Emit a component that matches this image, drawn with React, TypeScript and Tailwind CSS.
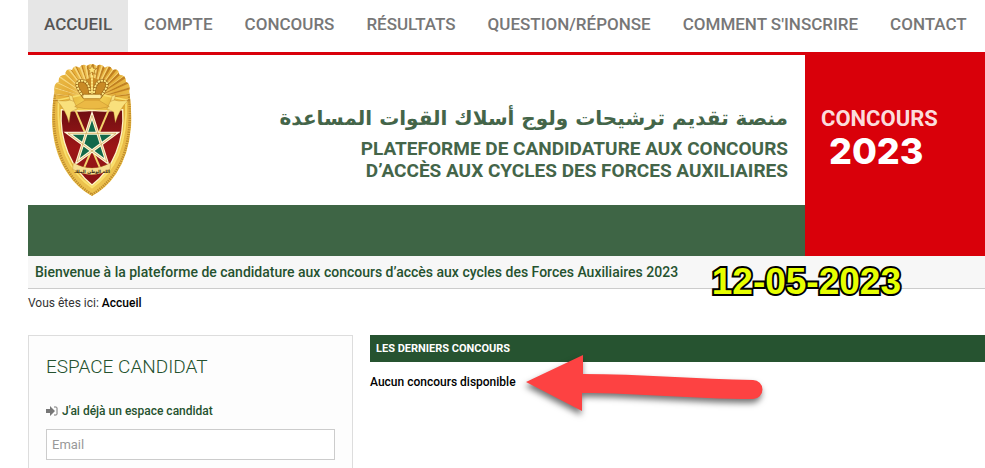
const navItems = [
  'Accueil',
  'Compte',
  'Concours',
  'Résultats',
  'Question/Réponse',
  "Comment s'inscrire",
  'Contact',
];

function Emblem() {
  const rays = Array.from({ length: 21 }, (_, i) => {
    const angle = Math.PI + (Math.PI * i) / 20;
    return { x: 160 + 160 * Math.cos(angle), y: 132 + 160 * Math.sin(angle) };
  });

  return (
    <svg viewBox="40 20 240 405" className="h-[135px] w-20" role="img" aria-label="Forces Auxiliaires">
      <defs>
        <linearGradient id="gold" x1="0" x2="1" y1="0" y2="1">
          <stop offset="0" stopColor="#d9a02c" />
          <stop offset="0.3" stopColor="#f8d95a" />
          <stop offset="0.55" stopColor="#dfa630" />
          <stop offset="0.8" stopColor="#fbe36c" />
          <stop offset="1" stopColor="#c98d22" />
        </linearGradient>
        <radialGradient id="glow" cx="0.5" cy="0.28" r="0.6">
          <stop offset="0" stopColor="#fbe68a" />
          <stop offset="0.5" stopColor="#e5ad38" />
          <stop offset="1" stopColor="#ecc24e" />
        </radialGradient>
        <linearGradient id="field" x1="0" x2="0" y1="0" y2="1">
          <stop offset="0" stopColor="#6f0f12" />
          <stop offset="0.5" stopColor="#9c1616" />
          <stop offset="1" stopColor="#8a1215" />
        </linearGradient>
        <path
          id="outline"
          d="M47 108Q44 84 60 80Q58 58 80 58Q80 38 100 44Q106 28 122 37Q132 22 144 32Q159 20 174 32Q188 22 198 37Q214 28 222 44Q240 38 242 58Q262 58 262 80Q276 84 272 108Q280 165 277 215Q270 300 232 356Q204 398 160 422Q116 398 88 356Q48 300 41 215Q38 165 47 108Z"
        />
        <clipPath id="shape">
          <use href="#outline" />
        </clipPath>
      </defs>

      <use href="#outline" fill="url(#glow)" />
      <g clipPath="url(#shape)">
        {rays.map((ray, i) => (
          <g key={i} opacity="0.7">
            <path d={`M160 132L${ray.x} ${ray.y}l9 7Z`} fill="#b06c16" />
            <path d={`M160 132L${ray.x} ${ray.y}l-8 3Z`} fill="#ffe795" />
          </g>
        ))}
        <path
          d="M48 120Q38 220 62 290Q88 372 160 418Q232 372 258 290Q280 220 271 120"
          fill="none"
          stroke="#c08c2d"
          strokeWidth="8"
          strokeDasharray="4 3"
        />
      </g>
      <path
        d="M60 134L160 112L262 134Q266 230 238 300Q212 360 160 397Q108 360 82 300Q54 230 60 134Z"
        fill="url(#gold)"
        stroke="#f9df6d"
        strokeWidth="5"
      />
      <path
        d="M68 163Q115 170 160 165Q208 170 252 163Q257 232 232 292Q208 352 160 389Q114 352 88 292Q63 232 68 163Z"
        fill="url(#field)"
        stroke="#fff3c4"
        strokeWidth="4"
      />

      {/* crossed axes */}
      <g stroke="#f3d46b" strokeWidth="6">
        <path d="M94 126L190 352" />
        <path d="M226 126L130 352" />
      </g>
      <g fill="#f9e07c" stroke="#a9711b" strokeWidth="1">
        <path d="M54 136Q84 140 103 132L116 160L96 170L91 202Q80 160 54 136Z" />
        <path d="M268 136Q238 140 218 132L205 160L225 170L230 202Q242 160 268 136Z" />
        <path d="M90 118L101 122L105 138L94 134Z" />
        <path d="M231 118L220 122L216 138L227 134Z" />
        <path d="M108 154L160 122L212 154Q160 168 108 154Z" fill="#ebb944" />
      </g>

      {/* crown */}
      <path d="M136 126Q104 80 128 76Q152 70 160 64Q168 70 192 76Q216 80 184 126Z" fill="#c98a26" />
      <g fill="none" stroke="#8f5a10" strokeWidth="9">
        <path d="M136 126Q98 78 128 76Q152 74 155 122" />
        <path d="M184 126Q222 78 192 76Q168 74 165 122" />
      </g>
      <g fill="none" stroke="#fde680" strokeWidth="6" strokeDasharray="7 2">
        <path d="M136 126Q98 78 128 76Q152 74 155 122" />
        <path d="M184 126Q222 78 192 76Q168 74 165 122" />
        <path d="M160 60V118" />
      </g>
      <rect x="132" y="117" width="56" height="13" rx="5" fill="#ffec9c" stroke="#99620f" strokeWidth="2" />
      <rect x="135" y="130" width="50" height="6" rx="2" fill="#dca234" />
      <path d="M160 29L164 39L175 39L166 46L170 57L160 50L150 57L154 46L145 39L156 39Z" fill="#ffe47a" stroke="#a86c16" strokeWidth="2" />

      {/* pentagram */}
      <path d="M160 184L176 234H232L188 267L205 320L160 286L115 320L132 267L88 234H144Z" fill="#12694a" />
      <path d="M160 180L205 320L88 234H232L115 320Z" fill="none" stroke="#fff6d8" strokeWidth="9" />
      <path d="M160 180L205 320L88 234H232L115 320Z" fill="none" stroke="#c9a24a" strokeWidth="2" />

      {/* motto ribbon */}
      <path d="M104 322Q160 354 216 322L214 342Q160 374 102 342Z" fill="#f6df91" stroke="#a9711b" strokeWidth="1" />
      <text x="160" y="353" textAnchor="middle" fontSize="13" fontWeight="700" fill="#3b2b10" fontFamily="DejaVu Sans, sans-serif">
        الله الوطن الملك
      </text>
    </svg>
  );
}

function SignInIcon() {
  return (
    <svg viewBox="0 0 12 12" className="h-3 w-3" aria-hidden="true">
      <path d="M0 4H4V1L9 6L4 11V8H0Z" fill="#777" />
      <path d="M8 2H10Q11 2 11 3V9Q11 10 10 10H8" fill="none" stroke="#777" />
    </svg>
  );
}

function Navigation() {
  return (
    <nav className="border-b-[3px] border-[#d9000a]">
      <ul className="flex h-[52px]">
        {navItems.map((item, i) => (
          <li key={item} className="shrink-0">
            <a
              href="#"
              className={`flex h-full items-center px-4 pb-0.5 text-[17px] font-medium whitespace-nowrap uppercase ${
                i === 0 ? 'bg-[#e6e6e6] text-[#555]' : 'text-[#777]'
              }`}
            >
              {item}
            </a>
          </li>
        ))}
      </ul>
    </nav>
  );
}

function Banner() {
  return (
    <header className="flex">
      <div className="min-w-0 flex-1">
        <div className="flex h-[150px] items-start justify-between pt-[7px] pr-[17px] pl-6">
          <Emblem />
          <div className="pt-9 text-right font-bold text-[#446549]">
            <p dir="rtl" lang="ar" className="text-right font-['DejaVu_Sans',sans-serif] text-xl leading-10 whitespace-nowrap">
              منصة تقديم ترشيحات ولوج أسلاك القوات المساعدة
            </p>
            <p className="text-[19px] leading-[22px] uppercase">
              Plateforme de candidature aux concours
              <br />
              d’accès aux cycles des Forces Auxiliaires
            </p>
          </div>
        </div>
        <div className="h-[51px] bg-[#3e6545]" />
      </div>
      <div className="w-[180px] shrink-0 bg-[#d9000a] pt-[50px] pl-4 text-white">
        <p className="text-[22px] leading-7 font-bold text-[#fbdcdc]">CONCOURS</p>
        <p className="pl-2 font-[Inter,sans-serif] text-4xl leading-9 font-extrabold">2023</p>
      </div>
    </header>
  );
}

function Welcome() {
  return (
    <div className="relative border-b border-[#ccc] bg-[#f7f7f7] px-[7px]">
      <p className="text-sm leading-8 font-medium text-[#25522f]">
        Bienvenue à la plateforme de candidature aux concours d’accès aux cycles des Forces Auxiliaires 2023
      </p>
      <span className="absolute top-1.5 right-[84px] font-['Liberation_Sans',Arial,sans-serif] text-[37px] leading-10 font-bold text-[#e6ff00] [-webkit-text-stroke:4px_black] [paint-order:stroke_fill]">
        12-05-2023
      </span>
    </div>
  );
}

function CandidateBox() {
  return (
    <aside className="w-[325px] shrink-0 border border-b-0 border-[#ddd] bg-[#fdfdfd] px-[17px] pt-4">
      <h2 className="text-[19px] leading-[30px] font-light text-[#25522f] uppercase">Espace candidat</h2>
      <form className="pt-[19px]">
        <label htmlFor="email" className="flex items-center gap-1 text-xs leading-5 font-medium text-[#25522f]">
          <SignInIcon />
          J'ai déjà un espace candidat
        </label>
        <input
          id="email"
          type="email"
          placeholder="Email"
          className="mt-2 h-[31px] w-full border border-[#ccc] bg-white px-[5px] text-[13px] placeholder:text-[#999]"
        />
      </form>
    </aside>
  );
}

function Arrow() {
  return (
    <svg viewBox="0 0 260 80" className="absolute top-[15px] left-[150px] h-20 w-[260px]" aria-hidden="true">
      <path
        d="M6 32L63 5V24C120 24 180 29 233 30A9 9 0 0 1 233 49C170 49 120 43 62 43V61Z"
        fill="#fd4242"
        className="drop-shadow-[-1px_4px_3px_rgba(0,0,0,0.55)]"
      />
    </svg>
  );
}

function LatestContests() {
  return (
    <main className="relative min-w-0 flex-1">
      <h3 className="bg-[#265330] px-1.5 text-[11px] leading-[27px] font-bold text-white uppercase">Les derniers concours</h3>
      <p className="pt-2.5 text-xs leading-5 font-medium text-black">Aucun concours disponible</p>
      <Arrow />
    </main>
  );
}

export default function App() {
  return (
    <div className="flex h-screen flex-col overflow-hidden bg-white pl-7 font-[Roboto,sans-serif]">
      <Navigation />
      <Banner />
      <Welcome />
      <p className="pt-1 pb-[22px] text-xs leading-5 text-[#333]">
        Vous êtes ici: <span className="font-medium text-black">Accueil</span>
      </p>
      <div className="flex flex-1 gap-[17px]">
        <CandidateBox />
        <LatestContests />
      </div>
    </div>
  );
}
